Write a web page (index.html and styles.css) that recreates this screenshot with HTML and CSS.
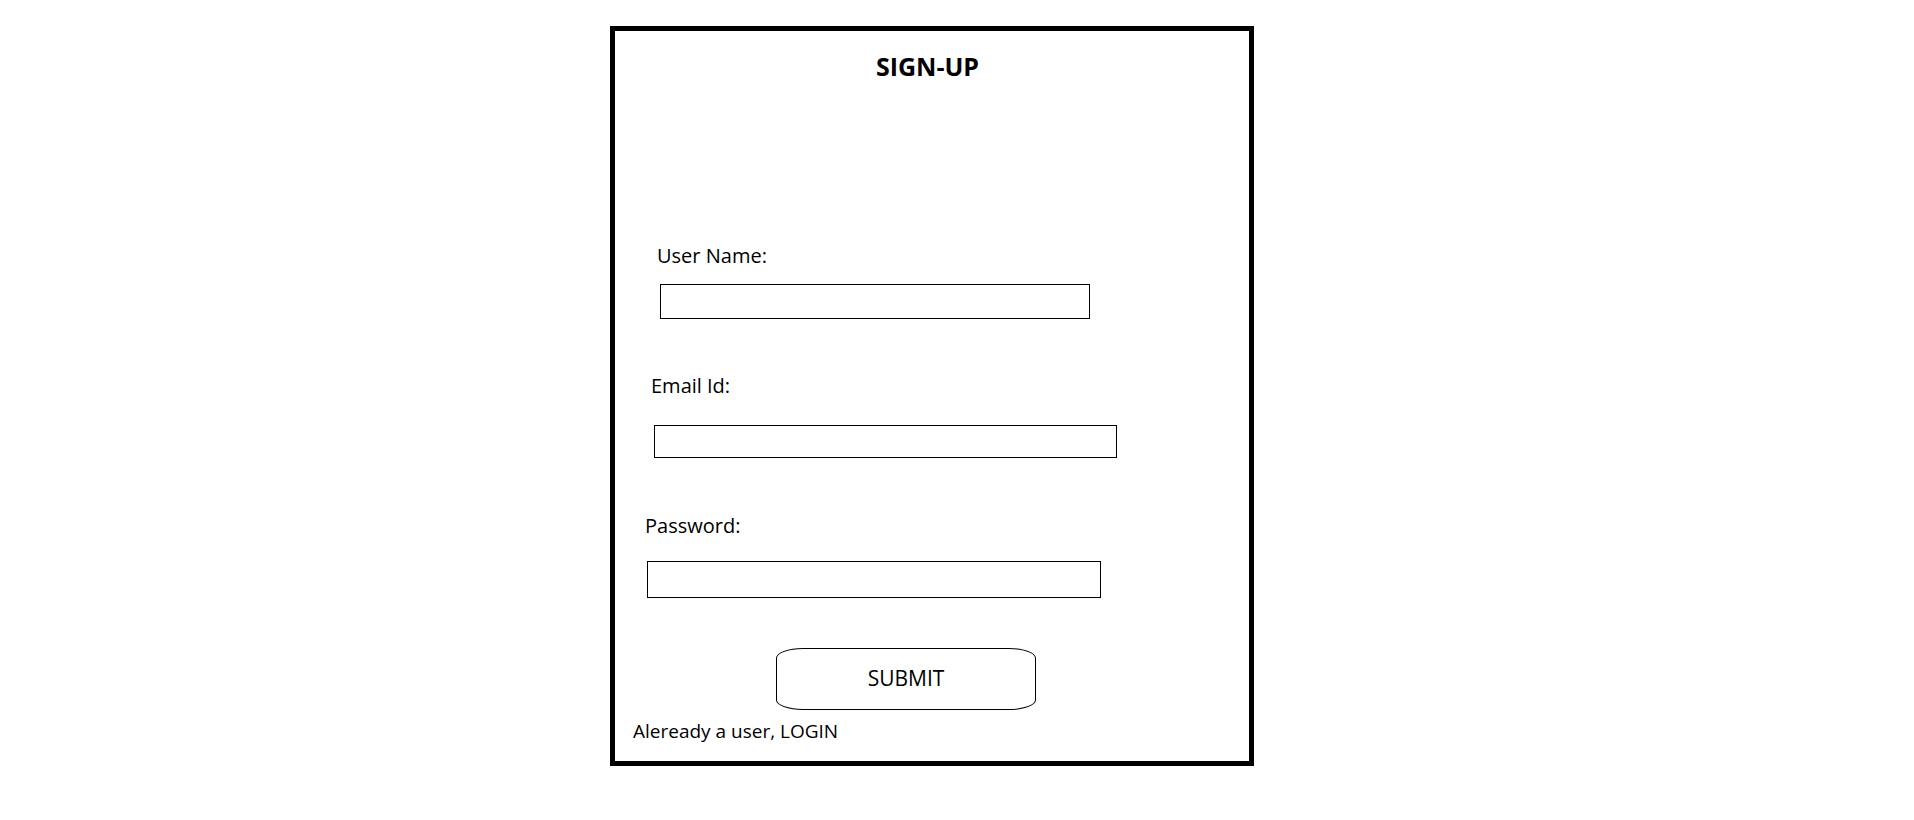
FILE: index.html
```html
<!DOCTYPE html>
<html lang="en">
<head>
<meta charset="utf-8">
<title>Sign-up</title>
<link rel="stylesheet" href="styles.css">
</head>
<body>
<main class="page">
  <form class="card">
    <h1 class="title">SIGN-UP</h1>
    <label class="label label-user" for="user">User Name:</label>
    <input class="field field-user" id="user" type="text">
    <label class="label label-email" for="email">Email Id:</label>
    <input class="field field-email" id="email" type="text">
    <label class="label label-pass" for="pass">Password:</label>
    <input class="field field-pass" id="pass" type="password">
    <button class="submit" type="button">SUBMIT</button>
    <p class="login">Aleready a user, LOGIN</p>
  </form>
</main>
</body>
</html>
```

FILE: styles.css
```css
* { box-sizing: border-box; }
html, body { margin: 0; padding: 0; background: #fff; }
body {
  font-family: "Open Sans", "Noto Sans", sans-serif;
  color: #000;
}
.page {
  padding: 26px 0 0 610px;
}
.card {
  width: 644px;
  height: 740px;
  border: 5px solid #000;
  display: flex;
  flex-direction: column;
  align-items: flex-start;
}
.title {
  margin: 18px 0 0 0;
  align-self: stretch;
  text-align: center;
  padding-right: 9px;
  font-size: 25px;
  line-height: 34px;
  font-weight: 700;
}
.label {
  font-size: 20px;
  line-height: 28px;
}
.label-user { margin: 159px 0 0 42px; }
.label-email { margin: 53px 0 0 36px; }
.label-pass { margin: 54px 0 0 30px; }
.field {
  display: block;
  border: 1px solid #000;
  padding: 0;
  outline: none;
  background: #fff;
}
.field-user { margin: 14px 0 0 45px; width: 430px; height: 35px; }
.field-email { margin: 25px 0 0 39px; width: 463px; height: 33px; }
.field-pass { margin: 21px 0 0 32px; width: 454px; height: 37px; }
.submit {
  margin: 50px 0 0 161px;
  width: 260px;
  height: 62px;
  border: 1px solid #000;
  border-radius: 27px / 10px;
  background: #fff;
  font-family: "Open Sans", "Noto Sans", sans-serif;
  font-size: 21px;
  color: #000;
  display: flex;
  align-items: center;
  justify-content: center;
  padding: 0 0 3px 0;
}
.login {
  margin: 8px 0 0 18px;
  font-size: 19px;
  line-height: 26px;
}
```
